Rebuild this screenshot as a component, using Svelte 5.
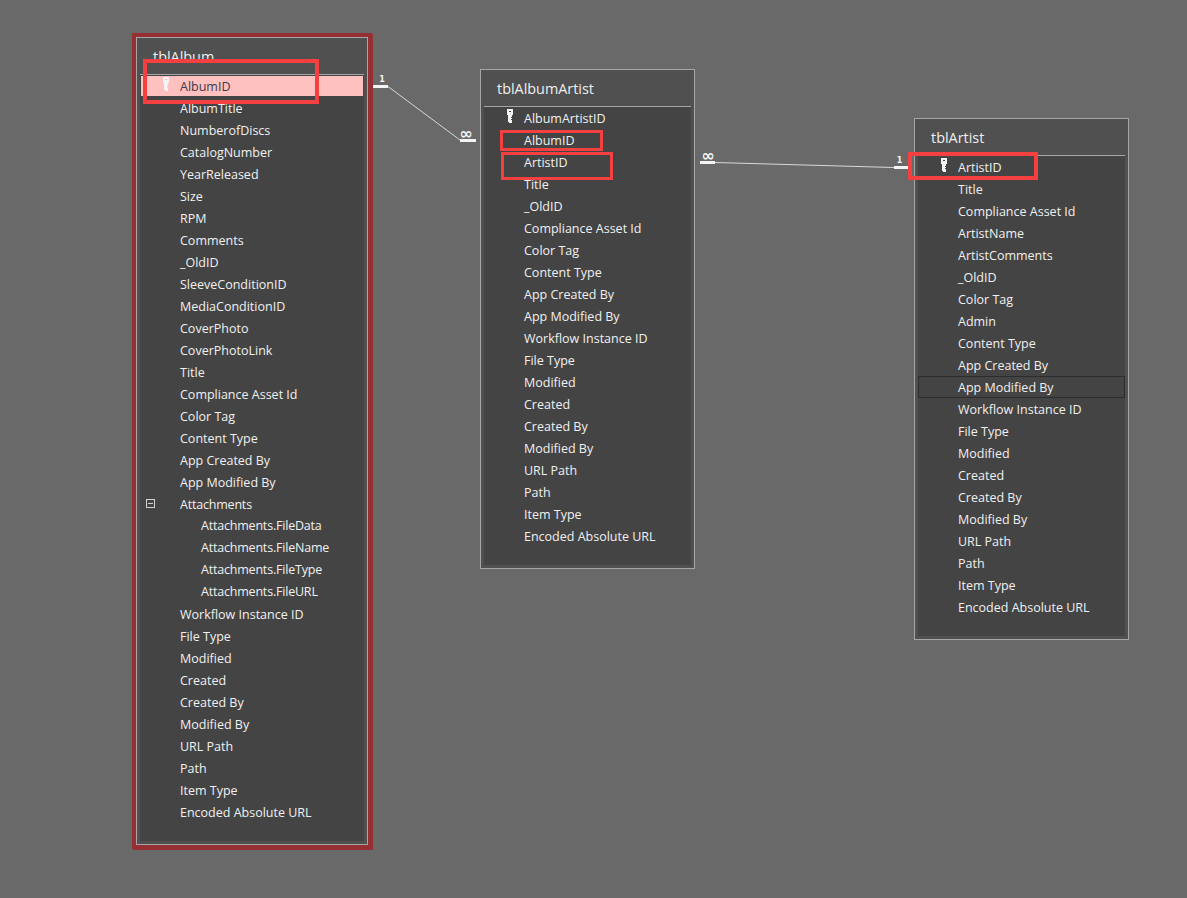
<script>
  const tables = [
    {
      name: 'tblAlbum', x: 136, y: 37, w: 232, h: 808, selected: true,
      rows: [
        { t: 'AlbumID', key: true, active: true }, { t: 'AlbumTitle' }, { t: 'NumberofDiscs' }, { t: 'CatalogNumber' },
        { t: 'YearReleased' }, { t: 'Size' }, { t: 'RPM' }, { t: 'Comments' }, { t: '_OldID' },
        { t: 'SleeveConditionID' }, { t: 'MediaConditionID' }, { t: 'CoverPhoto' }, { t: 'CoverPhotoLink' },
        { t: 'Title' }, { t: 'Compliance Asset Id' }, { t: 'Color Tag' }, { t: 'Content Type' },
        { t: 'App Created By' }, { t: 'App Modified By' }, { t: 'Attachments', toggle: true },
        { t: 'Attachments.FileData', sub: true }, { t: 'Attachments.FileName', sub: true },
        { t: 'Attachments.FileType', sub: true }, { t: 'Attachments.FileURL', sub: true },
        { t: 'Workflow Instance ID' }, { t: 'File Type' }, { t: 'Modified' }, { t: 'Created' },
        { t: 'Created By' }, { t: 'Modified By' }, { t: 'URL Path' }, { t: 'Path' }, { t: 'Item Type' },
        { t: 'Encoded Absolute URL' }
      ]
    },
    {
      name: 'tblAlbumArtist', x: 480, y: 69, w: 215, h: 500,
      rows: [
        { t: 'AlbumArtistID', key: true }, { t: 'AlbumID' }, { t: 'ArtistID' }, { t: 'Title' }, { t: '_OldID' },
        { t: 'Compliance Asset Id' }, { t: 'Color Tag' }, { t: 'Content Type' }, { t: 'App Created By' },
        { t: 'App Modified By' }, { t: 'Workflow Instance ID' }, { t: 'File Type' }, { t: 'Modified' },
        { t: 'Created' }, { t: 'Created By' }, { t: 'Modified By' }, { t: 'URL Path' }, { t: 'Path' },
        { t: 'Item Type' }, { t: 'Encoded Absolute URL' }
      ]
    },
    {
      name: 'tblArtist', x: 914, y: 118, w: 215, h: 522,
      rows: [
        { t: 'ArtistID', key: true }, { t: 'Title' }, { t: 'Compliance Asset Id' }, { t: 'ArtistName' },
        { t: 'ArtistComments' }, { t: '_OldID' }, { t: 'Color Tag' }, { t: 'Admin' }, { t: 'Content Type' },
        { t: 'App Created By' }, { t: 'App Modified By', focus: true }, { t: 'Workflow Instance ID' },
        { t: 'File Type' }, { t: 'Modified' }, { t: 'Created' }, { t: 'Created By' }, { t: 'Modified By' },
        { t: 'URL Path' }, { t: 'Path' }, { t: 'Item Type' }, { t: 'Encoded Absolute URL' }
      ]
    }
  ];

  // annotation boxes drawn over the diagram
  const marks = [
    { x: 143, y: 59, w: 176, h: 45, b: 4 },
    { x: 500, y: 130, w: 103, h: 21, b: 3 },
    { x: 501, y: 152, w: 112, h: 28, b: 3 },
    { x: 908, y: 152, w: 130, h: 28, b: 4 }
  ];
</script>

<div class="canvas">
  <svg class="links" width="1187" height="898" viewBox="0 0 1187 898">
    <path class="line" d="M388 86.500 L460 140" />
    <path class="line" d="M715 162.500 L894 167.500" />
    <path class="end" d="M373 85h15v3h-15z M460 139h16v3h-16z M700 161h15v3h-15z M894 166h14v3h-14z" />
    <text class="one" x="382" y="81.500">1</text>
    <text class="many" x="466" y="138.500">∞</text>
    <text class="many" x="708" y="160.500">∞</text>
    <text class="one" x="899.500" y="163">1</text>
  </svg>

  {#each tables as table}
    <section class="table" class:selected={table.selected} style="left:{table.x}px;top:{table.y}px;width:{table.w}px;height:{table.h}px">
      <h2>{table.name}</h2>
      <ul>
        {#each table.rows as row}
          <li class:sub={row.sub} class:group={row.toggle} class:active={row.active} class:focus={row.focus}>
            {#if row.key}
              <svg class="key" width="6" height="14" viewBox="0 0 6 14">
                <path fill-rule="evenodd" d="M0 0h6v6h-1v8h-3v-1h-1v-7h-1z M2 2h2v1h-2z M4 8h1v1h-1z M4 10h1v1h-1z" />
              </svg>
            {/if}
            {#if row.toggle}
              <span class="toggle"></span>
            {/if}
            {row.t}
          </li>
        {/each}
      </ul>
    </section>
  {/each}

  {#each marks as m}
    <div class="mark" style="left:{m.x}px;top:{m.y}px;width:{m.w}px;height:{m.h}px;border-width:{m.b}px"></div>
  {/each}
</div>

<style>
  :global(body) {
    background: #696969;
  }
  .canvas {
    position: relative;
    width: 1187px;
    height: 898px;
    overflow: hidden;
    background: #696969;
    font-family: "Open Sans", "Noto Sans", sans-serif;
    font-size: 12.5px;
    color: #f0f0f0;
  }
  .links {
    position: absolute;
    left: 0;
    top: 0;
  }
  .line {
    stroke: #d8d8d8;
    stroke-width: 1;
    fill: none;
  }
  .end {
    fill: #f4f4f4;
  }
  .links text {
    fill: #f4f4f4;
    font-family: "DejaVu Sans", sans-serif;
    font-weight: 700;
    text-anchor: middle;
  }
  .links .one {
    font-size: 8px;
  }
  .links .many {
    font-size: 16px;
  }
  .table {
    position: absolute;
    box-sizing: border-box;
    display: flex;
    flex-direction: column;
    padding: 0 3px 3px;
    border: 1px solid #a6a6a6;
    background: #505050;
  }
  .table.selected {
    box-shadow: 0 0 0 4px #952f33, 1px 1px 0 4px #952f33;
  }
  h2 {
    box-sizing: border-box;
    height: 37px;
    margin: 0;
    padding: 9px 0 0 13px;
    border-bottom: 1px solid #a6a6a6;
    font-size: 14.400px;
    line-height: 20px;
    font-weight: 400;
    color: #eeeeee;
  }
  ul {
    flex: 1;
    margin: 0;
    padding: 1px 0 0;
    list-style: none;
    background: #444444;
  }
  li {
    position: relative;
    box-sizing: border-box;
    height: 22px;
    padding-left: 40px;
    line-height: 22px;
    white-space: nowrap;
  }
  li.sub {
    padding-left: 61px;
    line-height: 20px;
    letter-spacing: -0.2px;
  }
  li.group {
    letter-spacing: -0.2px;
  }
  li.active {
    margin: 0 1px;
    padding: 0 0 2px;
    text-indent: 39px;
    color: #3b3b47;
    background: #ffc0c0;
    background-clip: content-box;
  }
  li.focus::after {
    content: "";
    position: absolute;
    left: 0;
    right: 0;
    top: -1px;
    height: 22px;
    border: 1px solid #2c2c2c;
    box-sizing: border-box;
  }
  .key {
    position: absolute;
    left: 23px;
    top: 1px;
    fill: #f4f4f4;
  }
  li.active .key {
    left: 22px;
  }
  .toggle {
    position: absolute;
    left: 6px;
    top: 5px;
    box-sizing: border-box;
    width: 9px;
    height: 9px;
    border: 1px solid #d0d0d0;
  }
  .toggle::after {
    content: "";
    position: absolute;
    left: 1px;
    top: 3px;
    width: 5px;
    height: 1px;
    background: #d0d0d0;
  }
  .mark {
    position: absolute;
    box-sizing: border-box;
    border-style: solid;
    border-color: #f44040;
  }
</style>
